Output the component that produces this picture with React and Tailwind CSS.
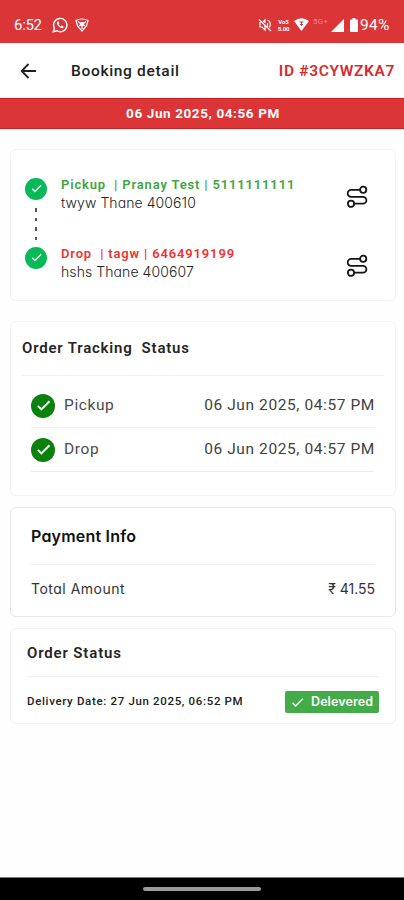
import React from 'react';

const Check = ({ className, size, width = 2.4 }) => (
  <svg className={className} width={size} height={size} viewBox="0 0 24 24" fill="none" stroke="#fff" strokeWidth={width}>
    <path d="M4 12.500l5 5L20.500 6" />
  </svg>
);

const RouteIcon = () => (
  <svg className="block shrink-0" width="22" height="24" viewBox="0 0 22 24" fill="none" stroke="#151515" strokeWidth="1.8">
    <circle cx="17.2" cy="4.8" r="3.1" />
    <circle cx="5" cy="18.8" r="3.1" />
    <path d="M14 4.900H5.200a3.500 3.500 0 0 0 0 7H17a3.400 3.400 0 0 1 0 6.800H8.200" />
  </svg>
);

const StatusBar = () => (
  <div className="flex h-[43px] items-center bg-[#dc3537] pl-[14px] pr-[13px] pt-[7px] text-white">
    <span className="w-[38px] text-[15px] leading-none tracking-[-0.3px]">6:52</span>
    <svg width="16" height="16" viewBox="0 0 24 24" fill="none" stroke="#fff" strokeWidth="2.2">
      <path d="M2 22l1.6-5.2A10 10 0 1 1 7.2 20.600z" />
      <path d="M8 7c-1.500 1.500-.5 4.500 2 7s5.500 3.500 7 2l.3-1.800-2.600-1.300-1.500 1.300c-1.600-.7-2.700-1.800-3.300-3.300l1.200-1.400L9.800 6.800z" fill="#fff" stroke="none" />
    </svg>
    <svg className="ml-[7px]" width="14" height="14" viewBox="0 0 14 14" fill="none" stroke="#fff" strokeWidth="1.2">
      <path d="M1 2.500Q7-.5 13 2.500L11.500 8 7 13 2.500 8z" />
      <path d="M3 3.500l4 3 4-3M4 8l3-2 3 2M7 6v5" />
      <circle cx="7" cy="6" r="1.700" fill="#fff" />
    </svg>
    <div className="flex-1" />
    <svg width="14" height="14" viewBox="0 0 14 14" fill="none" stroke="#fff" strokeWidth="1.200">
      <path d="M1 1.500l12 11.500M2 4v5h2l3 3V7M5 4l2-2v3M9.500 5v4M9.500 2c3 1 3.500 5 2 7.500" />
    </svg>
    <div className="ml-[5px] flex w-[13px] flex-col items-center text-[6px] font-bold leading-[7px] tracking-[-0.1px]">
      <span>Vo5</span>
      <span>5.00</span>
    </div>
    <svg className="ml-[4px] -translate-y-[1px]" width="15" height="13" viewBox="0 0 15 13">
      <path d="M0 3Q7.500-2.500 15 3L7.500 13z" fill="#fff" />
      <path d="M5.500 4h4M7.500 4v4M6 6.500h3" stroke="#a34a4b" strokeWidth="1" />
    </svg>
    <span className="ml-[4px] w-[17px] -translate-y-[3px] text-[8px] leading-none tracking-[0.3px] text-[#ef8b8c]">5G+</span>
    <svg className="ml-[1px]" width="13" height="13" viewBox="0 0 13 13" fill="#fff">
      <path d="M13 0v13H0z" />
    </svg>
    <svg className="ml-[6px]" width="8" height="14" viewBox="0 0 8 14" fill="#fff">
      <path d="M2.500 0h3v1.500H7a1 1 0 0 1 1 1V13a1 1 0 0 1-1 1H1a1 1 0 0 1-1-1V2.500a1 1 0 0 1 1-1h1.500z" />
    </svg>
    <span className="ml-[2px] w-[31px] whitespace-nowrap pt-[1px] text-[15.500px] leading-none tracking-[0.300px]">94%</span>
  </div>
);

const Stop = ({ title, address, color }) => (
  <div className="flex h-[37px] items-center">
    <div className="flex h-[22px] w-[22px] shrink-0 -translate-y-[1px] items-center justify-center rounded-full bg-[#07b957]">
      <Check size="13" />
    </div>
    <div className="ml-[14px] flex-1 whitespace-pre pt-[8px]">
      <div className={`h-[17px] text-[13px] font-semibold leading-[18px] tracking-[0.84px] ${color}`}>{title}</div>
      <div className="h-[19px] font-['Inter',sans-serif] text-[14px] font-light leading-[19px] tracking-[0.08px] text-[#222] [font-feature-settings:'cv11']">{address}</div>
    </div>
    <div className="mr-[3px] mt-[15px]"><RouteIcon /></div>
  </div>
);

const TrackRow = ({ label, time }) => (
  <div className="flex h-[43px] items-center">
    <div className="flex h-6 w-6 items-center justify-center rounded-full bg-[#0b810d]">
      <Check size="17" width={2.700} />
    </div>
    <span className="ml-[9px] text-[15.500px] tracking-[0.600px] text-[#4a4a4a]">{label}</span>
    <span className="ml-auto -mr-[1px] whitespace-nowrap text-[15.500px] tracking-[0.600px] text-[#3f3f3f]">{time}</span>
  </div>
);

export default function App() {
  return (
    <div className="flex h-[900px] w-[404px] flex-col overflow-hidden bg-[#fefefe] font-['Roboto',sans-serif]">
      <StatusBar />
      <header className="flex h-[55px] items-center bg-white pl-[20px] pr-[9px] pt-[3px]">
        <svg className="-translate-y-[1px]" width="17" height="16" viewBox="0 0 17 16" fill="none" stroke="#202020" strokeWidth="1.800">
          <path d="M16 8H2M8.500 1L1.700 8l6.800 7" />
        </svg>
        <h1 className="ml-[34px] text-[15.500px] font-medium tracking-[0.680px] text-[#222]">Booking detail</h1>
        <span className="ml-auto whitespace-nowrap text-[15.500px] font-semibold tracking-[0.650px] text-[#d32c2f]">ID #3CYWZKA7</span>
      </header>
      <div className="flex h-[31px] items-center justify-center border-y border-[#cf1d20] bg-[#dc3537] pl-[2px] text-[13.500px] font-bold tracking-[0.600px] text-white">
        06 Jun 2025, 04:56 PM
      </div>

      <main className="flex-1 pl-[10px] pr-[8px] pt-[20px]">
        <section className="h-[152px] rounded-[6px] border border-[#f4f4f4] bg-white pl-[14px] pr-[24px] pt-[21px]">
          <Stop title="Pickup  | Pranay Test | 5111111111" address="twyw Thane 400610" color="text-[#3da53f]" />
          <div className="flex h-[32px] w-[22px] flex-col items-center gap-[6px]">
            <i className="h-[4px] w-[2px] bg-[#555]" />
            <i className="h-[4px] w-[2px] bg-[#555]" />
            <i className="h-[4px] w-[2px] bg-[#555]" />
            <i className="h-[4px] w-[2px] bg-[#555]" />
          </div>
          <Stop title="Drop  | tagw | 6464919199" address="hshs Thane 400607" color="text-[#ee3430]" />
        </section>

        <section className="mt-[20px] h-[175px] rounded-[6px] border border-[#f4f4f4] bg-white px-[11px]">
          <h2 className="h-[54px] whitespace-pre border-b border-[#f0f0f0] text-[15px] font-semibold leading-[52px] tracking-[0.8px] text-[#252525]">Order Tracking  Status</h2>
          <div className="ml-[9px] mr-[10px] pt-[8px]">
            <div className="border-b border-[#f0f0f0]"><TrackRow label="Pickup" time="06 Jun 2025, 04:57 PM" /></div>
            <div className="border-b border-[#eaeaea]"><TrackRow label="Drop" time="06 Jun 2025, 04:57 PM" /></div>
          </div>
        </section>

        <section className="mt-[11px] h-[110px] rounded-[6px] border border-[#e8e8e8] bg-white px-[20px] font-['Inter',sans-serif] [font-feature-settings:'cv11']">
          <h2 className="h-[57px] border-b border-[#f0f0f0] text-[16px] font-semibold leading-[57px] tracking-[0.2px] text-[#111]">Payment Info</h2>
          <div className="flex h-[47px] items-center justify-between text-[14px] text-[#333]">
            <span className="tracking-[0.500px]">Total Amount</span>
            <span>₹ 41.55</span>
          </div>
        </section>

        <section className="mt-[11px] h-[96px] rounded-[6px] border border-[#f2f2f2] bg-white pl-[16px] pr-[16px]">
          <h2 className="h-[48px] border-b border-[#f0f0f0] text-[15px] font-semibold leading-[48px] tracking-[0.85px] text-[#252525]">Order Status</h2>
          <div className="flex h-[50px] items-center justify-between">
            <span className="whitespace-nowrap text-[11.500px] font-medium tracking-[0.660px] text-[#222]">Delivery Date: 27 Jun 2025, 06:52 PM</span>
            <span className="flex h-[22px] w-[94px] shrink-0 items-center rounded-[2px] bg-[#43ac49] pl-[5px] font-['Inter',sans-serif] text-[12.500px] font-semibold tracking-[0.1px] text-white [font-feature-settings:'cv11']">
              <Check className="mr-[6px]" size="15" />
              Delevered
            </span>
          </div>
        </section>
      </main>

      <footer className="flex h-[23px] items-center justify-center border-t border-[#777] bg-black">
        <div className="h-[4px] w-[118px] rounded-full bg-[#9a9a9a]" />
      </footer>
    </div>
  );
}
